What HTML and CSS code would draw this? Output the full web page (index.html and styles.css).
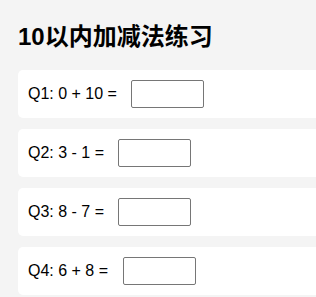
FILE: index.html
```html
<!DOCTYPE html>
<html lang="zh">
<head>
<meta charset="utf-8">
<title>10以内加减法练习</title>
<link rel="stylesheet" href="styles.css">
</head>
<body>
<div class="page">
  <h1 class="title">10以内加减法练习</h1>
  <div class="card"><span class="q">Q1: 0 + 10 = </span><input class="answer" type="text"></div>
  <div class="card"><span class="q">Q2: 3 - 1 = </span><input class="answer" type="text"></div>
  <div class="card"><span class="q">Q3: 8 - 7 = </span><input class="answer" type="text"></div>
  <div class="card"><span class="q">Q4: 6 + 8 = </span><input class="answer" type="text"></div>
</div>
</body>
</html>
```
FILE: styles.css
```css
html, body {
  margin: 0;
  padding: 0;
  overflow: hidden;
  background: #f4f4f4;
}
.page {
  padding: 23px 0 0 18px;
  font-family: "Liberation Sans", Arial, "Noto Sans CJK SC", sans-serif;
  color: #000;
}
.title {
  margin: 0 0 19px 0;
  font-size: 24px;
  line-height: 28px;
  font-weight: bold;
}
.card {
  display: flex;
  align-items: center;
  background: #fff;
  border-radius: 5px 0 0 5px;
  padding: 10px;
  margin-bottom: 11px;
  font-size: 16px;
  line-height: 18px;
}
.q {
  white-space: pre;
  margin-right: 10px;
}
.answer {
  box-sizing: border-box;
  width: 73px;
  height: 28px;
  border: 1px solid #767676;
  border-radius: 2px;
  padding: 1px 2px;
  margin: 0;
  font-size: 16px;
  background: #fff;
}
```
